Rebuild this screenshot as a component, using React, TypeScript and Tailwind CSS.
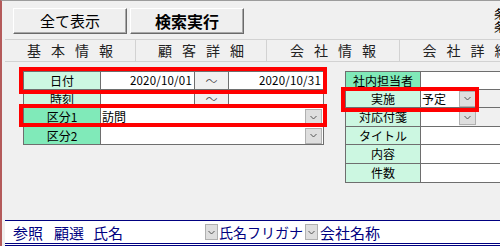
import React from "react";

const font = { fontFamily: '"MS UI Gothic", "Noto Sans CJK JP", sans-serif' };

function Chevron() {
  return (
    <svg width="7" height="5" viewBox="0 0 7 5" className="block">
      <path d="M0.5 1 L3.5 4 L6.5 1" fill="none" stroke="#555" strokeWidth="1" />
    </svg>
  );
}

function DropBtn({ className = "" }: { className?: string }) {
  return (
    <div
      className={`flex items-center justify-center bg-[#dedede] border border-[#b0b0b0] shrink-0 ${className}`}
    >
      <Chevron />
    </div>
  );
}

function Label({ text, strong }: { text: string; strong?: boolean }) {
  return (
    <div
      className={`flex items-center justify-center text-[12px] leading-none text-black ${
        strong ? "bg-[#80eab9]" : "bg-[#ccf7e1]"
      }`}
    >
      {text}
    </div>
  );
}

function Tab({ text, w, last }: { text: string; w: string; last?: boolean }) {
  return (
    <div
      className={`${w} shrink-0 h-full flex items-center justify-center text-[14px] tracking-[10px] pl-[10px] text-[#222] ${
        last ? "" : "border-r border-[#d2d2d2]"
      }`}
    >
      {text}
    </div>
  );
}

export default function App() {
  return (
    <div
      style={font}
      className="relative w-[500px] h-[246px] overflow-hidden bg-[#f0f0f0] border-t border-t-[#9c9c9c] border-l-2 border-l-[#b45a5a] flex flex-col"
    >
      {/* buttons */}
      <div className="flex gap-[3px] pl-[11px] pt-[7px]">
        <button className="w-[114px] h-[26px] bg-[#efefef] border border-t-white border-l-white border-b-[#6a6a6a] border-r-[#6a6a6a] text-[15px] text-black shadow-[inset_-1px_-1px_0_#a8a8a8]">
          全て表示
        </button>
        <button className="w-[114px] h-[26px] bg-[#efefef] border border-t-white border-l-white border-b-[#6a6a6a] border-r-[#6a6a6a] text-[16px] font-bold text-black shadow-[inset_-1px_-1px_0_#a8a8a8]">
          検索実行
        </button>
      </div>

      {/* tabs */}
      <div className="mt-[5px] ml-[3px] h-[23px] flex border-y border-[#d2d2d2]">
        <Tab text="基本情報" w="w-[131px]" />
        <Tab text="顧客詳細" w="w-[131px]" />
        <Tab text="会社情報" w="w-[133px]" />
        <Tab text="会社詳細" w="w-[131px]" last />
      </div>

      {/* form */}
      <div className="flex items-start pl-[21px] mt-[9px]">
        <div className="grid grid-cols-[76px_93px_33px_94px] grid-rows-[17px_17px_18px_17px] gap-px p-px bg-[#6e6e6e] shrink-0">
          <Label text="日付" />
          <div className="bg-white flex items-center justify-end pr-[2px] text-[11.5px] tracking-[0.2px]">2020/10/01</div>
          <div className="bg-[#f0f0f0] flex items-center justify-center text-[12px] font-light text-[#333]">～</div>
          <div className="bg-white flex items-center justify-end pr-[2px] text-[11.5px] tracking-[0.2px]">2020/10/31</div>

          <Label text="時刻" />
          <div className="bg-white" />
          <div className="bg-[#f0f0f0] flex items-center justify-center text-[12px] font-light text-[#333]">～</div>
          <div className="bg-white" />

          <Label text="区分1" strong />
          <div className="col-span-3 bg-white flex items-center pl-px text-[12px]">
            <span className="flex-1">訪問</span>
            <DropBtn className="w-[17px] h-[16px] mr-px" />
          </div>

          <Label text="区分2" strong />
          <div className="col-span-3 bg-white flex items-center justify-end">
            <DropBtn className="w-[17px] h-[16px] mr-px" />
          </div>
        </div>

        <div className="ml-[21px] grid grid-cols-[74px_110px] grid-rows-[17px_17px_18px_17px_18px_18px] gap-px p-px bg-[#6e6e6e] shrink-0">
          <Label text="社内担当者" strong />
          <div className="bg-white" />

          <Label text="実施" />
          <div className="bg-[#f0f0f0] flex items-center">
            <div className="w-[38px] h-full bg-white flex items-center pl-px text-[12px]">予定</div>
            <DropBtn className="w-[17px] h-[16px]" />
          </div>

          <Label text="対応付箋" />
          <div className="bg-[#f0f0f0] flex items-center">
            <div className="w-[38px] h-full bg-white" />
            <DropBtn className="w-[17px] h-[16px]" />
          </div>

          <Label text="タイトル" />
          <div className="bg-white" />
          <Label text="内容" />
          <div className="bg-white" />
          <Label text="件数" />
          <div className="bg-white" />
        </div>
      </div>

      {/* bottom search header */}
      <div className="mt-auto ml-[3px] h-[26px] flex flex-col">
        <div className="h-[23px] bg-white border-t border-[#000080] flex items-center pl-[8px] text-[15px] text-[#000080] leading-none">
          <span>参照</span>
          <span className="ml-[11px]">顧選</span>
          <span className="ml-[9px] w-[112px]">氏名</span>
          <DropBtn className="w-[13px] h-[16px]" />
          <span className="ml-[1px] w-[86px] whitespace-nowrap text-[14px]">氏名フリガナ</span>
          <DropBtn className="w-[13px] h-[16px]" />
          <span className="ml-[2px] whitespace-nowrap">会社名称</span>
        </div>
        <div className="h-[3px] border-y border-[#000080] bg-white" />
      </div>

      {/* clipped text at the top-right edge */}
      <div className="absolute left-[492px] top-[6px] text-[12px] leading-[13px] text-black">
        <div>条</div>
        <div>条</div>
      </div>

      {/* red annotation boxes */}
      <div className="absolute left-[17px] top-[66px] w-[308px] h-[27px] border-4 border-[#ff0000]" />
      <div className="absolute left-[17px] top-[103px] w-[308px] h-[23px] border-4 border-[#ff0000]" />
      <div className="absolute left-[339px] top-[86px] w-[138px] h-[25px] border-4 border-[#ff0000]" />
    </div>
  );
}
